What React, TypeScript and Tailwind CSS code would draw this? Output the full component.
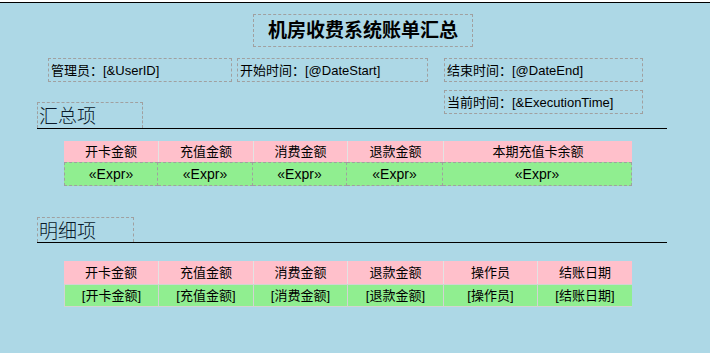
import React from "react";

const font = { fontFamily: '"Liberation Sans","Noto Sans CJK SC",sans-serif' };

const sumHead = ["开卡金额", "充值金额", "消费金额", "退款金额", "本期充值卡余额"];
const detHead = ["开卡金额", "充值金额", "消费金额", "退款金额", "操作员", "结账日期"];

export default function App() {
  return (
    <div className="w-[710px] h-[353px] bg-[#add8e6] overflow-hidden text-black" style={font}>
      <div className="h-[2px] bg-white" />
      <div className="h-[1px] bg-black" />

      {/* title */}
      <div className="mt-[11px] ml-[253px] w-[220px] h-[33px] border border-dashed border-[#a0a0a0] flex items-center justify-center text-[19px] font-bold leading-none">
        机房收费系统账单汇总
      </div>

      {/* info row 1 */}
      <div className="mt-[11px] flex text-[13px] leading-none">
        <div className="ml-[48px] w-[184px] h-[24px] border border-dashed border-[#a0a0a0] flex items-center pl-[2px]">管理员：[&amp;UserID]</div>
        <div className="ml-[5px] w-[191px] h-[24px] border border-dashed border-[#a0a0a0] flex items-center pl-[2px]">开始时间：[@DateStart]</div>
        <div className="ml-[16px] w-[199px] h-[24px] border border-dashed border-[#a0a0a0] flex items-center pl-[2px]">结束时间：[@DateEnd]</div>
      </div>

      {/* info row 2 + section heading */}
      <div className="mt-[8px] flex h-[38px]">
        <div className="self-end ml-[37px] w-[106px] h-[26px] border border-b-0 border-dashed border-[#a0a0a0] flex items-end pl-[1px] text-[19px] font-light leading-none text-[#0a1a2a] pb-[2px]">
          汇总项
        </div>
        <div className="self-start ml-[301px] w-[199px] h-[24px] border border-dashed border-[#a0a0a0] flex items-center pl-[2px] text-[13px] leading-none">
          当前时间：[&amp;ExecutionTime]
        </div>
      </div>
      <div className="ml-[37px] w-[630px] h-[1px] bg-black" />

      {/* summary table */}
      <div className="mt-[12px] ml-[64px] w-[568px] text-[13px] leading-none">
        <div className="grid grid-cols-[94px_95px_94px_96px_189px] h-[21px] bg-[#ffc0cb]">
          {sumHead.map((h, i) => (
            <div key={i} className={`flex items-center justify-center ${i > 0 ? "border-l border-[#e3e3e3]" : ""}`}>{h}</div>
          ))}
        </div>
        <div className="grid grid-cols-[94px_95px_94px_96px_189px] h-[24px] bg-[#90ee90]">
          {sumHead.map((_, i) => (
            <div key={i} className={`flex items-center justify-center border-t border-b border-r border-dashed border-[#a0a0a0] text-[14px] ${i === 0 ? "border-l" : ""}`}>«Expr»</div>
          ))}
        </div>
      </div>

      {/* detail heading */}
      <div className="mt-[31px] ml-[37px] w-[97px] h-[25px] border border-b-0 border-dashed border-[#a0a0a0] flex items-end pl-[1px] pb-[1px] text-[19px] font-light leading-none text-[#0a1a2a]">
        明细项
      </div>
      <div className="ml-[37px] w-[630px] h-[1px] bg-black" />

      {/* detail table */}
      <div className="mt-[18px] ml-[64px] w-[568px] text-[13px] leading-none">
        <div className="grid grid-cols-[94px_95px_94px_96px_94px_95px] h-[23px] bg-[#ffc0cb]">
          {detHead.map((h, i) => (
            <div key={i} className={`flex items-center justify-center ${i > 0 ? "border-l border-[#e3e3e3]" : ""}`}>{h}</div>
          ))}
        </div>
        <div className="grid grid-cols-[94px_95px_94px_96px_94px_95px] h-[23px] bg-[#90ee90] border-t border-b border-[#d3d3d3]">
          {detHead.map((h, i) => (
            <div key={i} className="flex items-center justify-center border-l border-[#d3d3d3]">[{h}]</div>
          ))}
        </div>
      </div>
    </div>
  );
}
